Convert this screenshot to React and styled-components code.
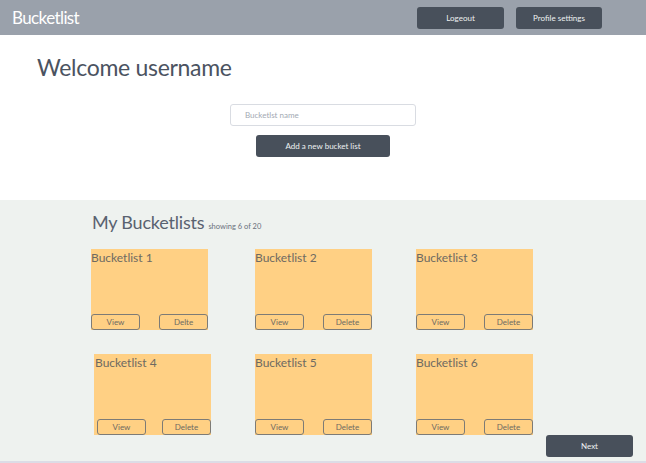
import React from "react";
import styled, { createGlobalStyle } from "styled-components";

const GlobalStyle = createGlobalStyle`
  html, body {
    margin: 0;
    padding: 0;
    background: #ffffff;
    font-family: Lato, "Open Sans", "Liberation Sans", sans-serif;
  }
  * {
    box-sizing: border-box;
  }
`;

// 상단 바
const Header = styled.header`
  height: 35px;
  background: #9aa1ab;
  display: flex;
  align-items: center;
  padding: 0 44px 0 12px;
`;

const Brand = styled.div`
  flex: 1;
  color: #ffffff;
  font-size: 17px;
  letter-spacing: -0.6px;
  line-height: 1;
  margin-top: -1px;
`;

const DarkButton = styled.button`
  width: ${({ w }) => w || 87}px;
  height: 22px;
  border: none;
  border-radius: 3px;
  background: #48505b;
  color: #eef0f2;
  font-family: inherit;
  font-size: 8px;
  cursor: pointer;
  margin-left: ${({ gap }) => gap || 0}px;
`;

// 환영 영역
const Hero = styled.section`
  height: 165px;
  padding: 17px 37px 0;
`;

const Welcome = styled.h1`
  margin: 0;
  font-weight: 400;
  font-size: 23px;
  letter-spacing: -0.3px;
  color: #4b5361;
  line-height: 30px;
`;

const Form = styled.div`
  display: flex;
  flex-direction: column;
  align-items: center;
  gap: 9px;
  margin-top: 22px;
`;

const NameInput = styled.input`
  width: 186px;
  height: 22px;
  border: 1px solid #d9dce2;
  border-radius: 3px;
  padding: 0 0 0 14px;
  font-family: inherit;
  font-size: 8px;
  color: #4b5361;
  outline: none;
  &::placeholder {
    color: #a2a9b3;
  }
`;

// 목록 영역
const ListSection = styled.section`
  height: 263px;
  background: #eef2ef;
  border-bottom: 2px solid #dcdce6;
  padding: 10px 13px 0 91px;
  display: flex;
  flex-direction: column;
`;

const ListTitle = styled.div`
  display: flex;
  align-items: baseline;
  gap: 4px;
  color: #596270;
  margin-left: 1px;
`;

const TitleText = styled.h2`
  margin: 0;
  font-weight: 400;
  font-size: 18px;
  letter-spacing: -0.2px;
  line-height: 24px;
`;

const Count = styled.span`
  font-size: 7.5px;
  color: #6a717c;
`;

const Grid = styled.div`
  display: grid;
  grid-template-columns: 164px 161px 117px;
  row-gap: 24px;
  margin-top: 15px;
`;

const Card = styled.div`
  width: 117px;
  height: 81px;
  background: #ffd084;
  display: flex;
  flex-direction: column;
  justify-content: space-between;
  margin-left: ${({ shift }) => shift || 0}px;
`;

const CardTitle = styled.div`
  font-size: 12px;
  line-height: 15px;
  color: #6e6a62;
  padding: 1px 0 0 ${({ inset }) => inset || 0}px;
`;

const CardActions = styled.div`
  display: flex;
  justify-content: space-between;
  padding-left: ${({ inset }) => inset || 0}px;
`;

const OutlineButton = styled.button`
  width: 49px;
  height: 16px;
  border: 1.5px solid #7d7b76;
  border-radius: 3px;
  background: transparent;
  font-family: inherit;
  font-size: 8px;
  color: #6e6a62;
  padding: 0;
  cursor: pointer;
`;

const Footer = styled.div`
  display: flex;
  justify-content: flex-end;
`;

const cards = [
  { id: 1, del: "Delte" },
  { id: 2, del: "Delete" },
  { id: 3, del: "Delete" },
  { id: 4, del: "Delete", shift: 3 },
  { id: 5, del: "Delete" },
  { id: 6, del: "Delete" },
];

const App = () => {
  return (
    <>
      <GlobalStyle />
      <Header>
        <Brand>Bucketlist</Brand>
        <DarkButton>Logeout</DarkButton>
        <DarkButton gap={12} w={86}>
          Profile settings
        </DarkButton>
      </Header>

      <Hero>
        <Welcome>Welcome username</Welcome>
        <Form>
          <NameInput placeholder="Bucketlst name" />
          <DarkButton w={134}>Add a new bucket list</DarkButton>
        </Form>
      </Hero>

      <ListSection>
        <ListTitle>
          <TitleText>My Bucketlists</TitleText>
          <Count>showing 6 of 20</Count>
        </ListTitle>
        <Grid>
          {cards.map((c) => (
            <Card key={c.id} shift={c.shift}>
              <CardTitle inset={c.shift ? 1 : 0}>Bucketlist {c.id}</CardTitle>
              <CardActions inset={c.shift}>
                <OutlineButton>View</OutlineButton>
                <OutlineButton>{c.del}</OutlineButton>
              </CardActions>
            </Card>
          ))}
        </Grid>
        <Footer>
          <DarkButton w={87}>Next</DarkButton>
        </Footer>
      </ListSection>
    </>
  );
};

export default App;
